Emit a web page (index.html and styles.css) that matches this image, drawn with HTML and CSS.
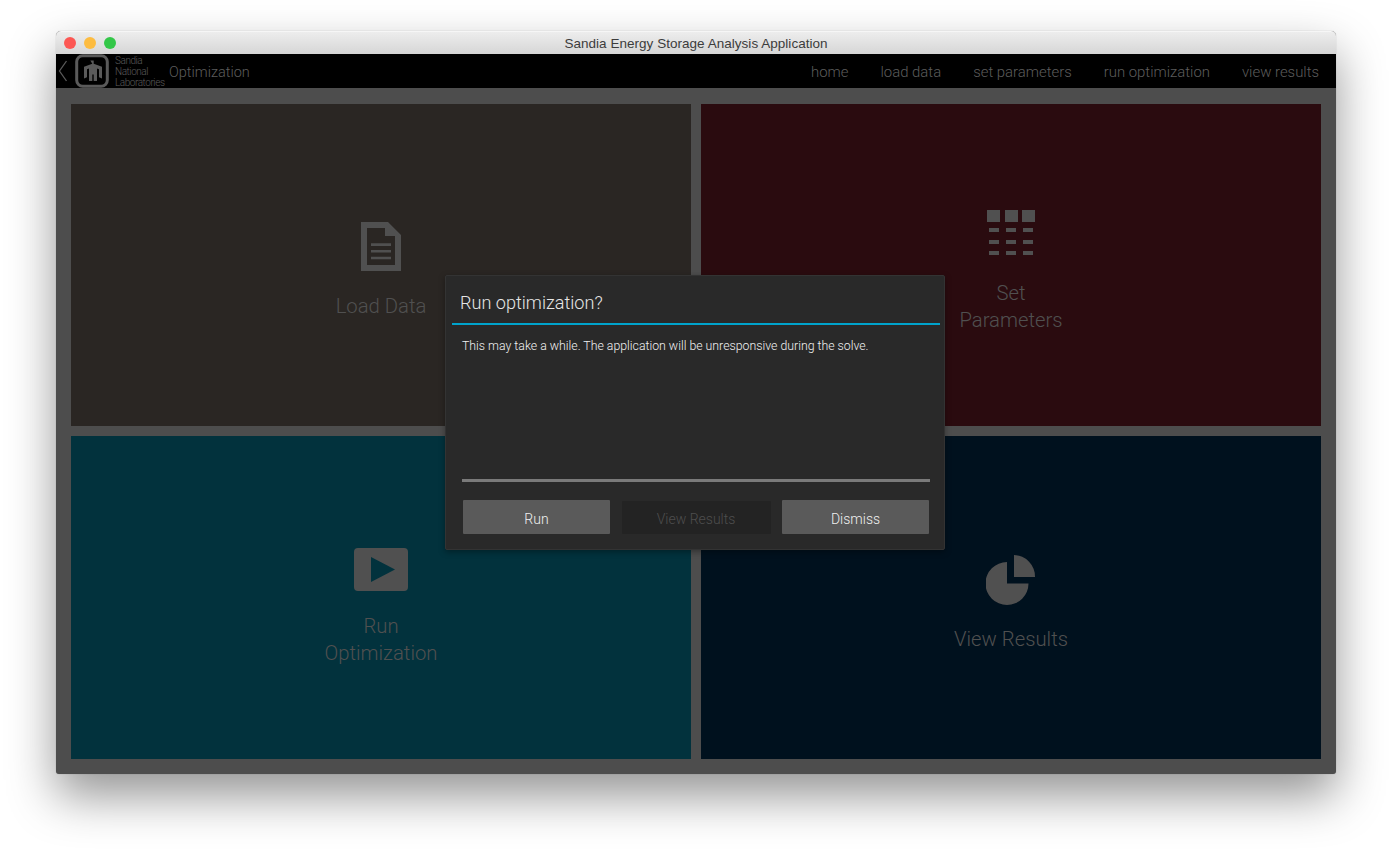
FILE: index.html
```html
<!DOCTYPE html>
<html lang="en">
<head>
<meta charset="utf-8">
<title>Sandia Energy Storage Analysis Application</title>
<link rel="stylesheet" href="styles.css">
</head>
<body>
<div class="window">
  <header class="titlebar">
    <div class="lights"><span class="light red"></span><span class="light yellow"></span><span class="light green"></span></div>
    <div class="title">Sandia Energy Storage Analysis Application</div>
  </header>
  <nav class="nav">
    <svg class="back" width="10" height="22" viewBox="0 0 10 22"><path d="M8.500 1 1.500 11l7 10" fill="none" stroke="#5a5a5a" stroke-width="1.300"/></svg>
    <svg class="logo" width="34" height="34" viewBox="0 0 34 34"><rect x="1.700" y="1.700" width="30.600" height="30.600" rx="6" fill="none" stroke="#5a5a5a" stroke-width="3"/><path d="M15.300 6.500h3.400v3.200l8.300 3.100v11.700l-3-1.200v-8l-2-.7V27h-3.300v-6.500h-1.400V27h-3.300V14.600l-2 .7v8l-3 1.200V12.800l8.300-3.100z" fill="#5a5a5a"/></svg>
    <div class="wordmark"><span>Sandia</span><span>National</span><span>Laboratories</span></div>
    <div class="page-name">Optimization</div>
    <div class="links"><a>home</a><a>load data</a><a>set parameters</a><a>run optimization</a><a>view results</a></div>
  </nav>
  <main class="grid">
    <section class="tile tile-load">
      <svg class="icon" width="40" height="49" viewBox="0 0 40 49"><path fill-rule="evenodd" d="M0 0h27l13 13v36H0zM6 6v37h28V14H24V6z" fill="#505050"/><path d="M10 21.300h20v2.600H10zM10 28h20v2.600H10zM10 34.700h20v2.600H10z" fill="#505050"/></svg>
      <div class="label">Load Data</div>
    </section>
    <section class="tile tile-set">
      <svg class="icon" width="48" height="45" viewBox="0 0 48 45"><path fill="#505050" d="M0 0h13v12H0zM18 0h13v12H18zM35 0h13v12H35zM2 18h10v4H2zM19 18h10v4H19zM36 18h10v4H36zM2 30h10v4H2zM19 30h10v4H19zM36 30h10v4H36zM2 41h10v4H2zM19 41h10v4H19zM36 41h10v4H36z"/></svg>
      <div class="label">Set<br>Parameters</div>
    </section>
    <section class="tile tile-run">
      <svg class="icon" width="54" height="43" viewBox="0 0 54 43"><rect width="54" height="43" rx="4" fill="#505050"/><path d="M17 9l24 12.500L17 34z" fill="#02323d"/></svg>
      <div class="label">Run<br>Optimization</div>
    </section>
    <section class="tile tile-view">
      <svg class="icon" width="50" height="50" viewBox="0 0 50 50"><path d="M21 7v21.500h21.500A21.500 21.500 0 1 1 21 7z" fill="#505050"/><path d="M28 0a21.500 21.500 0 0 1 21 22H28z" fill="#505050"/></svg>
      <div class="label">View Results</div>
    </section>
  </main>
  <div class="dialog">
    <h2 class="dialog-title">Run optimization?</h2>
    <div class="dialog-body">
      <p class="message">This may take a while. The application will be unresponsive during the solve.</p>
      <div class="progress"></div>
      <div class="actions"><button class="btn">Run</button><button class="btn btn-off">View Results</button><button class="btn">Dismiss</button></div>
    </div>
  </div>
</div>
</body>
</html>
```

FILE: styles.css
```css
* { box-sizing: border-box; }
html, body { height: 100%; }
body {
  margin: 0;
  padding: 31px 56px 0;
  background: #fff;
  font-family: Roboto, "Liberation Sans", sans-serif;
  overflow: hidden;
}
.window {
  position: relative;
  width: 1280px;
  height: 743px;
  display: flex;
  flex-direction: column;
  border-radius: 5px 5px 3px 3px;
  background: #4d4d4d;
  box-shadow: 0 0 1px rgba(0,0,0,.35), 0 22px 48px rgba(0,0,0,.42);
}
.titlebar {
  position: relative;
  height: 23px;
  flex: none;
  display: flex;
  align-items: center;
  justify-content: center;
  background: linear-gradient(#ededed, #d6d6d6);
  border-top: 1px solid #f6f6f6;
  border-radius: 5px 5px 0 0;
}
.lights { position: absolute; left: 8px; top: 5px; display: flex; gap: 8px; }
.light { width: 12px; height: 12px; border-radius: 50%; }
.red { background: #fc5753; }
.yellow { background: #fdbc40; }
.green { background: #33c748; }
.title { font: 13.500px "Liberation Sans", Arial, sans-serif; letter-spacing: .03px; color: #3c3c3c; }
.nav {
  height: 34px;
  flex: none;
  display: flex;
  align-items: center;
  background: #000;
  padding: 0 17px 0 2px;
  color: #5c5c5c;
}
.back { flex: none; margin-right: 7px; margin-top: -1px; }
.logo { flex: none; margin-right: 6px; }
.wordmark {
  display: flex;
  flex-direction: column;
  width: 54px;
  font-size: 10px;
  line-height: 11px;
  font-weight: 300;
  letter-spacing: -.45px;
  color: #5a5a5a;
  white-space: nowrap;
}
.page-name { font-size: 14.500px; font-weight: 300; margin-top: 2px; }
.links { margin-left: auto; display: flex; gap: 32px; font-size: 14.900px; font-weight: 300; margin-top: 2px; }
.grid {
  flex: 1;
  display: grid;
  grid-template-columns: 620px 620px;
  grid-template-rows: 322px 323px;
  gap: 10px;
  padding: 16px 15px 15px;
}
.tile {
  display: flex;
  flex-direction: column;
  align-items: center;
  text-align: center;
  color: #505050;
  font-size: 20.300px;
  font-weight: 300;
  line-height: 27px;
}
.tile-load { background: #2a2623; padding-top: 118px; }
.tile-set { background: #2a0b0f; padding-top: 106px; }
.tile-run { background: #02323d; padding-top: 112px; }
.tile-view { background: #00111e; padding-top: 119px; }
.icon { display: block; margin-bottom: 21px; }
.tile-load .icon { margin-bottom: 22px; }
.tile-set .icon { margin-bottom: 25px; }
.tile-run .icon { margin-bottom: 22px; }
.dialog {
  position: absolute;
  left: 389px;
  top: 244px;
  width: 500px;
  height: 275px;
  display: flex;
  flex-direction: column;
  background: #292929;
  border: 1px solid #333;
  border-radius: 2px;
  box-shadow: 0 2px 6px rgba(0,0,0,.35);
  padding: 0 4px 0 6px;
}
.dialog-title {
  margin: 0;
  height: 49px;
  flex: none;
  padding: 14px 0 0 8px;
  border-bottom: 2px solid #00a3cc;
  color: #e6e6e6;
  font-size: 18.100px;
  line-height: 26px;
  font-weight: 300;
}
.dialog-body { flex: 1; display: flex; flex-direction: column; padding: 0 10px; }
.message { margin: 13px 0 0; flex: 1; color: #f2f2f2; font-size: 12.300px; line-height: 16px; font-weight: 300; }
.progress { height: 3px; flex: none; background: #7a7a7a; margin-bottom: 18px; }
.actions { display: flex; justify-content: space-between; padding: 0 1px; margin-bottom: 15px; }
.btn {
  width: 147px;
  height: 34px;
  border: 0;
  border-radius: 1px;
  background: #5a5a5a;
  color: #f0f0f0;
  font: 300 14px/34px Roboto, sans-serif;
  padding: 2px 0 0;
}
.btn-off { width: 149px; height: 33px; margin-top: 1px; padding-top: 1px; background: #232323; color: #4e4e4e; }
```
